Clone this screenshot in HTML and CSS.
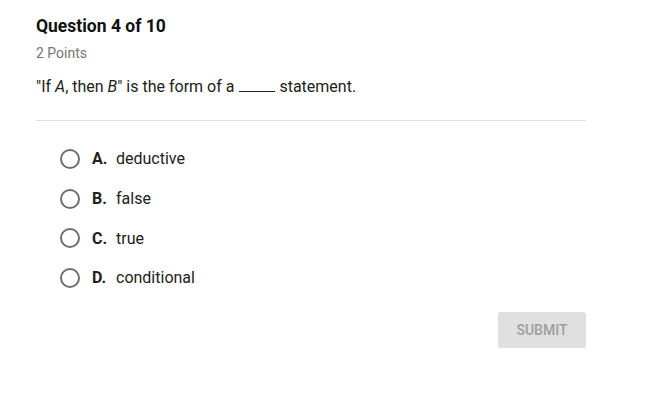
FILE: index.html
```html
<!DOCTYPE html>
<html>
<head>
<meta charset="utf-8">
<link rel="stylesheet" href="styles.css">
</head>
<body>
<div class="quiz">
  <div class="title">Question 4 of 10</div>
  <div class="points">2 Points</div>
  <div class="question">"If <i>A</i>, then <i>B</i>" is the form of a <span class="blank"></span> statement.</div>
  <div class="divider"></div>
  <ul class="options">
    <li class="option"><span class="radio"></span><span class="letter">A.</span><span class="text">deductive</span></li>
    <li class="option"><span class="radio"></span><span class="letter">B.</span><span class="text">false</span></li>
    <li class="option"><span class="radio"></span><span class="letter">C.</span><span class="text">true</span></li>
    <li class="option"><span class="radio"></span><span class="letter">D.</span><span class="text">conditional</span></li>
  </ul>
  <div class="actions"><button class="submit">SUBMIT</button></div>
</div>
</body>
</html>
```
FILE: styles.css
```css
html, body { margin: 0; padding: 0; background: #fff; }
body { font-family: Roboto, "Noto Sans", sans-serif; color: #212121; }
.quiz { width: 550px; padding: 15px 0 0 36px; }
.title { font-size: 17.5px; font-weight: 700; line-height: 22px; color: #111; }
.points { font-size: 14px; line-height: 18px; color: #757575; margin-top: 7px; }
.question { font-size: 16px; line-height: 20px; margin-top: 15px; color: #212121; }
.blank { display: inline-block; width: 36px; border-bottom: 1px solid #212121; margin: 0 0 0 1px; }
.divider { height: 1px; background: #e0e0e0; margin-top: 23px; }
.options { list-style: none; margin: 0; padding: 0 0 0 24px; margin-top: 18px; }
.option { display: flex; align-items: center; height: 39.7px; font-size: 16px; }
.radio { width: 16px; height: 16px; border: 2px solid #6e6e6e; border-radius: 50%; box-sizing: content-box; margin-right: 12px; }
.letter { font-weight: 700; width: 24px; }
.actions { display: flex; justify-content: flex-end; margin-top: 14px; }
.submit { width: 88px; height: 36px; border: none; border-radius: 2px; background: #e0e0e0; color: #9e9e9e; font-family: Roboto, sans-serif; font-size: 14px; font-weight: 500; padding: 0; }
```
